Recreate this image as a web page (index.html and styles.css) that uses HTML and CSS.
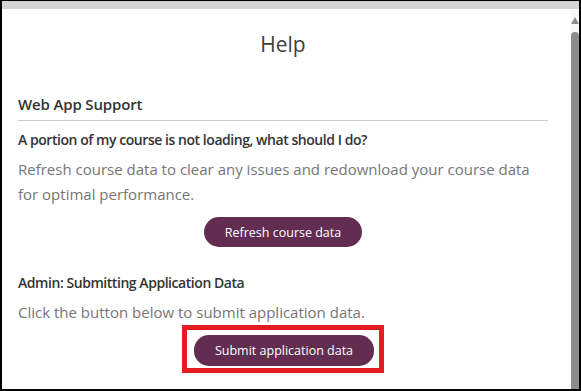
FILE: index.html
```html
<!DOCTYPE html>
<html lang="en">
<head>
    <meta charset="UTF-8">
    <meta name="viewport" content="width=device-width, initial-scale=1.0">
    <title>Help</title>
    <link rel="stylesheet" href="styles.css">
</head>
<body>
    <div class="frame">
        <div class="topbar"></div>
        <div class="window">
            <div class="panel">
                <h1 class="title">Help</h1>
                <h2 class="section-title">Web App Support</h2>
                <div class="question">A portion of my course is not loading, what should I do?</div>
                <p class="answer">Refresh course data to clear any issues and redownload your course data for optimal performance.</p>
                <div class="actions">
                    <button class="pill-button">Refresh course data</button>
                </div>
                <div class="question admin">Admin: Submitting Application Data</div>
                <p class="answer">Click the button below to submit application data.</p>
                <div class="actions tight">
                    <span class="highlight">
                        <button class="pill-button submit">Submit application data</button>
                    </span>
                </div>
            </div>
            <div class="scrollbar">
                <div class="arrow"></div>
                <div class="thumb"></div>
            </div>
        </div>
    </div>
</body>
</html>
```

FILE: styles.css
```css
html, body {
    margin: 0;
    height: 100%;
}

body {
    background-color: #ffffff;
    font-family: 'Open Sans', 'Noto Sans', sans-serif;
    overflow: hidden;
}

.frame {
    box-sizing: border-box;
    height: 391px;
    border-top: 1px solid #000000;
    border-left: 2px solid #000000;
    border-right: 2px solid #000000;
    border-bottom: 2px solid #000000;
    display: flex;
    flex-direction: column;
}

.topbar {
    height: 8px;
    background-color: #d3d3d3;
}

.window {
    flex: 1;
    display: flex;
    overflow: hidden;
}

.panel {
    flex: 1;
    padding: 0 23px 0 16px;
}

.title {
    margin: 21px 0 0;
    text-align: center;
    font-size: 21px;
    font-weight: 400;
    line-height: 28px;
    color: #404040;
}

.section-title {
    margin: 36px 0 0;
    padding-bottom: 6px;
    border-bottom: 1px solid #cccccc;
    font-size: 15px;
    font-weight: 600;
    line-height: 20px;
    letter-spacing: -0.15px;
    color: #333333;
}

.question {
    margin-top: 9px;
    font-size: 14px;
    font-weight: 600;
    line-height: 20px;
    letter-spacing: -0.45px;
    color: #333333;
}

.question.admin {
    margin-top: 26px;
}

.answer {
    margin: 7px 0 0;
    font-size: 15px;
    line-height: 25px;
    color: #767676;
}

.actions {
    display: flex;
    justify-content: center;
    margin-top: 10px;
}

.actions.tight {
    margin-top: 0;
}

.pill-button {
    height: 30px;
    padding: 0 21px;
    border: none;
    border-radius: 15px;
    background-color: #632d51;
    color: #ffffff;
    font-family: 'Open Sans', 'Noto Sans', sans-serif;
    font-size: 12.5px;
    cursor: pointer;
}

.highlight {
    display: inline-block;
    border: 5px solid #e31b23;
    padding: 5px 5px 2px 7px;
}

.pill-button.submit {
    display: block;
    height: 31px;
    width: 180px;
    padding: 0;
}

.scrollbar {
    width: 8px;
    background-color: #f7f7f7;
    display: flex;
    flex-direction: column;
    align-items: center;
}

.arrow {
    margin-top: 8px;
    width: 0;
    height: 0;
    border-left: 4px solid transparent;
    border-right: 4px solid transparent;
    border-bottom: 7px solid #8c8c8c;
}

.thumb {
    flex: 1;
    width: 8px;
    margin-top: 8px;
    border-radius: 4px 4px 0 0;
    background-color: #8c8c8c;
}
```
